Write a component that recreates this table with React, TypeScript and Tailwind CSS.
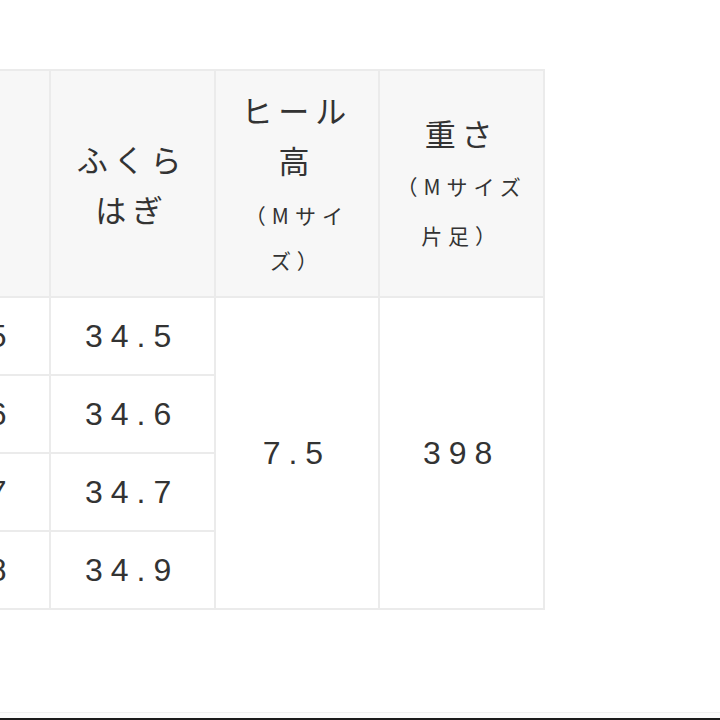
import React from 'react';

const ROWS = [
  { ankle: '23.5', calf: '34.5' },
  { ankle: '23.6', calf: '34.6' },
  { ankle: '23.7', calf: '34.7' },
  { ankle: '23.8', calf: '34.9' },
];

const cell = 'border-2 border-[#ebebeb] text-center align-middle';
const num = 'text-[32px] tracking-[8px] text-[#333] font-["Liberation_Sans","Noto_Sans_CJK_JP",sans-serif]';

export default function App() {
  return (
    <div className="flex h-[720px] w-[720px] flex-col overflow-hidden bg-white font-['Noto_Sans_CJK_JP',sans-serif] text-[#333]">
      <table className="mt-[69px] ml-[-116px] w-[661px] table-fixed border-collapse">
        <thead>
          <tr className="h-[227px] bg-[#f7f7f7]">
            <th className={`${cell} text-[31px] font-normal leading-[50px] tracking-[6px]`}>足首</th>
            <th className={`${cell} text-[31px] font-normal leading-[50px] tracking-[6px]`}>
              ふくら<br />はぎ
            </th>
            <th className={`${cell} font-normal`}>
              <div className="text-[31px] leading-[50px] tracking-[6px]">
                ヒール<br />高
              </div>
              <div className="mt-[8px] text-[21px] leading-[45px] tracking-[6px]">
                （Mサイ<br />ズ）
              </div>
            </th>
            <th className={`${cell} font-normal`}>
              <div className="text-[31px] leading-[50px] tracking-[6px]">重さ</div>
              <div className="mt-[4px] text-[21px] leading-[49px] tracking-[6px]">
                （Mサイズ<br />片足）
              </div>
            </th>
          </tr>
        </thead>
        <tbody>
          {ROWS.map((r, i) => (
            <tr key={r.calf} className="h-[78px]">
              <td className={`${cell} ${num}`}>{r.ankle}</td>
              <td className={`${cell} ${num}`}>{r.calf}</td>
              {i === 0 && (
                <>
                  <td rowSpan={4} className={`${cell} ${num}`}>7.5</td>
                  <td rowSpan={4} className={`${cell} ${num}`}>398</td>
                </>
              )}
            </tr>
          ))}
        </tbody>
      </table>
      <div className="flex-1" />
      <div className="h-[1px] bg-[#f0f0f0]" />
      <div className="h-[5px] bg-[#fcfcfc]" />
      <div className="h-[2px] bg-[#1c1c1c]" />
    </div>
  );
}
